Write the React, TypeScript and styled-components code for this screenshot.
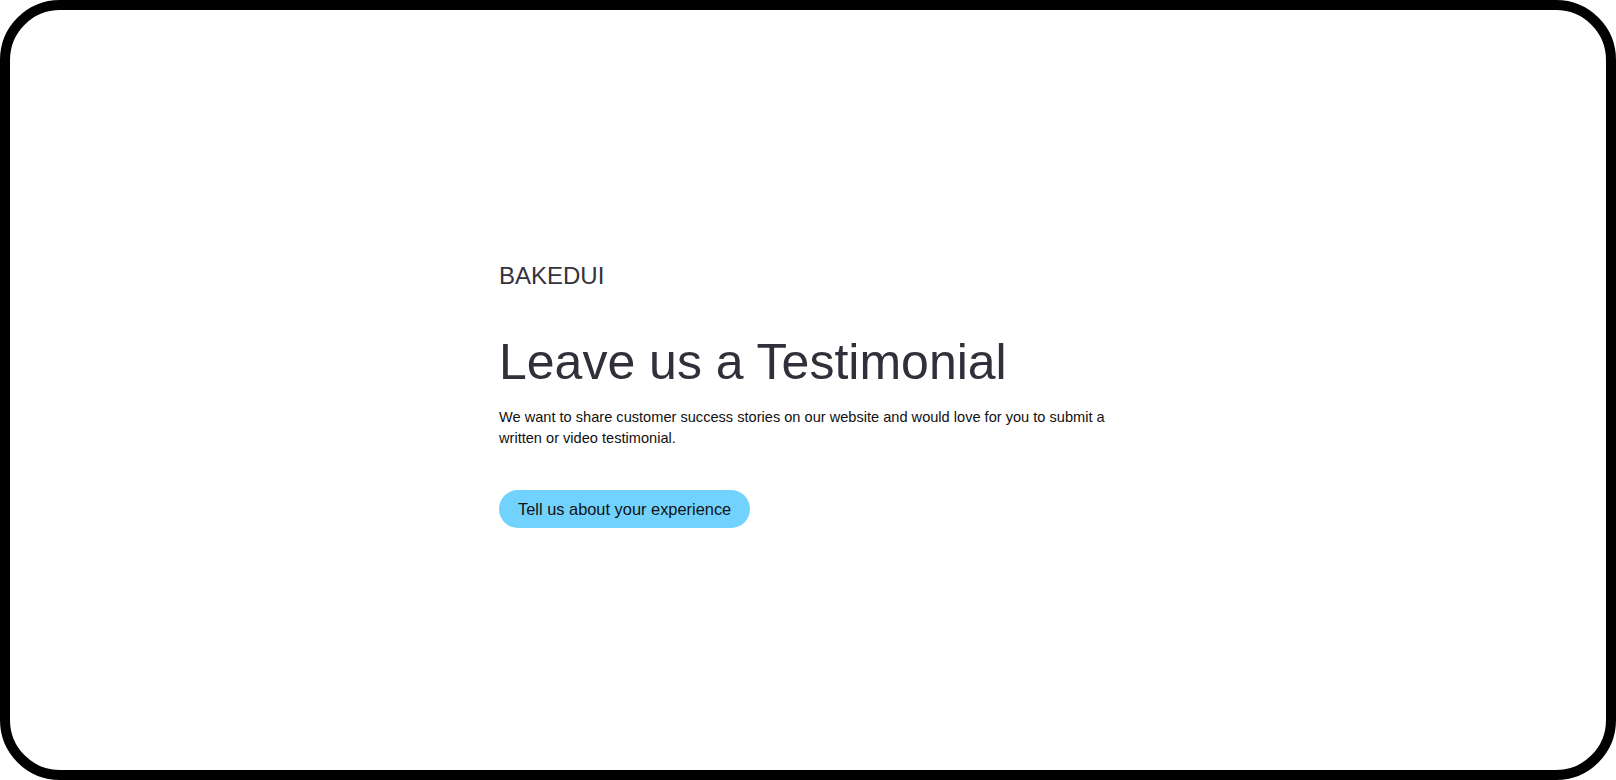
import React from 'react';
import styled, { createGlobalStyle } from 'styled-components';

const GlobalStyle = createGlobalStyle`
  * {
    box-sizing: border-box;
  }
  html, body {
    margin: 0;
    padding: 0;
    background: #ffffff;
  }
  body {
    font-family: "Liberation Sans", Arial, sans-serif;
  }
`;

const Frame = styled.div`
  width: 100vw;
  height: 100vh;
  border: 10px solid #000;
  border-radius: 60px;
  background: #fff;
  display: flex;
  justify-content: center;
  overflow: hidden;
`;

const Content = styled.section`
  width: 624px;
  padding: 252px 0 0 3px;
  display: flex;
  flex-direction: column;
  align-items: flex-start;
`;

const Brand = styled.div`
  font-size: 24px;
  color: #35333d;
`;

const Title = styled.h1`
  margin: 43px 0 0;
  font-size: 50px;
  font-weight: 400;
  color: #302f3a;
`;

const Lead = styled.p`
  margin: 16px 0 0;
  font-size: 14.6px;
  line-height: 21px;
  color: #111;
`;

const CtaButton = styled.button`
  margin-top: 41px;
  height: 38px;
  padding: 0 19px;
  border: none;
  border-radius: 19px;
  background: #72d2fe;
  color: #111;
  font-family: "Liberation Sans", Arial, sans-serif;
  font-size: 16.4px;
  cursor: pointer;
`;

export default function App() {
  return (
    <>
      <GlobalStyle />
      <Frame>
        <Content>
          <Brand>BAKEDUI</Brand>
          <Title>Leave us a Testimonial</Title>
          <Lead>
            We want to share customer success stories on our website and would love for you to submit a written or video testimonial.
          </Lead>
          <CtaButton>Tell us about your experience</CtaButton>
        </Content>
      </Frame>
    </>
  );
}
